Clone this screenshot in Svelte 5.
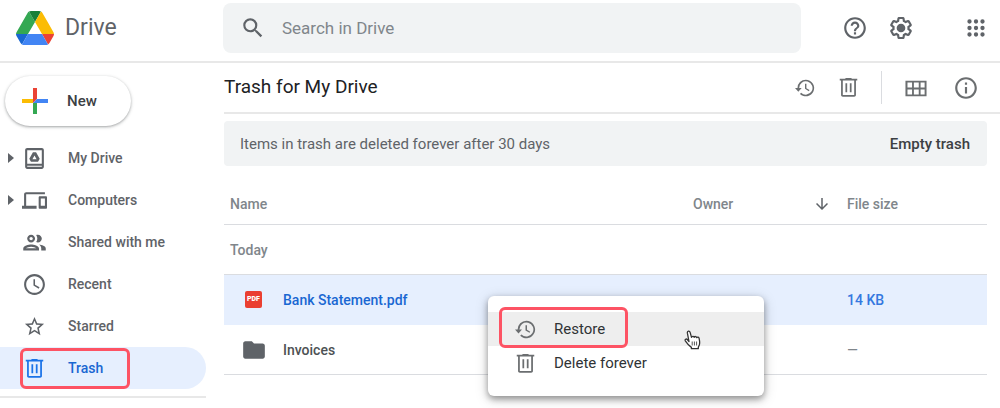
<script lang="ts">
  let search = '';
  let selected = 'Bank Statement.pdf';
  let activeNav = 'Trash';

  const navItems = [
    { label: 'My Drive', icon: 'drive', size: 25, expandable: true },
    { label: 'Computers', icon: 'computers', size: 25, expandable: true },
    { label: 'Shared with me', icon: 'shared', size: 27, expandable: false },
    { label: 'Recent', icon: 'recent', size: 25, expandable: false },
    { label: 'Starred', icon: 'star', size: 23, expandable: false },
    { label: 'Trash', icon: 'trash', size: 21, expandable: false },
  ];

  const files = [
    { name: 'Bank Statement.pdf', type: 'pdf', owner: '', size: '14 KB' },
    { name: 'Invoices', type: 'folder', owner: '', size: '—' },
  ];

  // 24x24 glyphs, filled with currentColor
  const icons: Record<string, string> = {
    search: 'M15.5 14h-.79l-.28-.27A6.47 6.47 0 0 0 16 9.5 6.5 6.5 0 1 0 9.5 16c1.61 0 3.09-.59 4.23-1.57l.27.28v.79l5 4.99L20.49 19l-4.99-5zm-6 0C7.01 14 5 11.99 5 9.5S7.01 5 9.5 5 14 7.01 14 9.5 11.99 14 9.5 14z',
    help: 'M11 18h2v-2h-2v2zm1-16C6.48 2 2 6.48 2 12s4.48 10 10 10 10-4.48 10-10S17.52 2 12 2zm0 18c-4.41 0-8-3.59-8-8s3.59-8 8-8 8 3.59 8 8-3.59 8-8 8zm0-14c-2.21 0-4 1.79-4 4h2c0-1.1.9-2 2-2s2 .9 2 2c0 2-3 1.75-3 5h2c0-2.25 3-2.5 3-5 0-2.21-1.79-4-4-4z',
    gear: 'M13.85 22.25h-3.7c-.74 0-1.36-.54-1.45-1.27l-.27-1.89c-.27-.14-.53-.29-.79-.46l-1.8.72c-.7.26-1.47-.03-1.81-.65L2.2 15.53c-.35-.66-.2-1.44.36-1.88l1.53-1.19c-.01-.15-.02-.3-.02-.46 0-.15.01-.31.02-.46l-1.52-1.19c-.59-.45-.74-1.26-.37-1.88l1.85-3.19c.34-.62 1.11-.9 1.79-.63l1.81.73c.26-.17.52-.32.78-.46l.27-1.91c.09-.7.71-1.25 1.44-1.25h3.7c.74 0 1.36.54 1.45 1.27l.27 1.89c.27.14.53.29.79.46l1.8-.72c.71-.26 1.48.03 1.82.65l1.84 3.18c.36.66.2 1.44-.36 1.88l-1.52 1.19c.01.15.02.3.02.46s-.01.31-.02.46l1.52 1.19c.56.45.72 1.23.37 1.86l-1.86 3.22c-.34.62-1.11.9-1.8.63l-1.8-.72c-.26.17-.52.32-.78.46l-.27 1.91c-.1.68-.72 1.22-1.46 1.22zm-3.23-2h2.76l.37-2.55.53-.22c.44-.18.88-.44 1.34-.78l.45-.34 2.38.96 1.38-2.4-2.03-1.58.07-.56c.03-.26.06-.51.06-.78s-.03-.53-.06-.78l-.07-.56 2.03-1.58-1.39-2.4-2.39.96-.45-.35c-.42-.32-.87-.58-1.33-.77l-.52-.22-.37-2.55h-2.76l-.37 2.55-.53.21c-.44.19-.88.44-1.34.79l-.45.33-2.38-.95-1.39 2.39 2.03 1.58-.07.56a7 7 0 0 0-.06.79c0 .26.02.53.06.78l.07.56-2.03 1.58 1.38 2.4 2.39-.96.45.35c.43.33.86.58 1.33.77l.53.22.38 2.55zM12 8a4 4 0 1 0 0 8 4 4 0 0 0 0-8z',
    apps: 'M6 8a2 2 0 1 0 0-4 2 2 0 0 0 0 4zm6 12a2 2 0 1 0 0-4 2 2 0 0 0 0 4zm-6 0a2 2 0 1 0 0-4 2 2 0 0 0 0 4zm0-6a2 2 0 1 0 0-4 2 2 0 0 0 0 4zm6 0a2 2 0 1 0 0-4 2 2 0 0 0 0 4zm4-8a2 2 0 1 0 4 0 2 2 0 0 0-4 0zm-4 2a2 2 0 1 0 0-4 2 2 0 0 0 0 4zm6 6a2 2 0 1 0 0-4 2 2 0 0 0 0 4zm0 6a2 2 0 1 0 0-4 2 2 0 0 0 0 4z',
    restore: 'M13 2a10 10 0 0 0-10 10H0l4 4.600L8 12H5a8 8 0 1 1 2.340 5.660l-1.420 1.420A10 10 0 1 0 13 2zm-1 5v6l4.600 2.800.8-1.300-3.700-2.300V7H12z',
    trash: 'M15.500 2V1h-7v1H2v2h1.500v16.500c0 1.100.9 2 2 2h13c1.100 0 2-.9 2-2V4H22V2h-6.500zm3 18.500h-13V4h13v16.500zM8.500 7h2v10.500h-2V7zm5 0h2v10.500h-2V7z',
    grid: 'M.5 4v17h23V4H.5zm7.200 15H2.700v-5.500h5V19zm0-7.500h-5V6h5v5.500zm7.300 7.500H9.700v-5.500H15V19zm0-7.500H9.700V6H15v5.500zm6.400 7.500H17v-5.500h4.400V19zm0-7.500H17V6h4.400v5.500z',
    info: 'M11 17h2v-6h-2v6zm1-15C6.480 2 2 6.480 2 12s4.480 10 10 10 10-4.480 10-10S17.520 2 12 2zm0 18c-4.410 0-8-3.590-8-8s3.590-8 8-8 8 3.590 8 8-3.590 8-8 8zM11 9h2V7h-2v2z',
    drive: 'M19 2H5c-1.100 0-2 .9-2 2v16c0 1.100.9 2 2 2h14c1.100 0 2-.9 2-2V4c0-1.100-.9-2-2-2zm0 18H5v-1h14v1zm0-3H5V4h14v13zM10.500 6 7 12.200 8.600 15h6.800l1.600-2.800L13.500 6h-3zm1.500 3 2 3.600h-4L12 9z',
    computers: 'M4 6h18V4H4c-1.100 0-2 .9-2 2v11H0v3h14v-3H4V6zm19 2h-6c-.55 0-1 .45-1 1v10c0 .55.45 1 1 1h6c.55 0 1-.45 1-1V9c0-.55-.45-1-1-1zm-1 9h-4v-7h4v7z',
    shared: 'M9 13.750c-2.340 0-7 1.170-7 3.500V19h14v-1.750c0-2.330-4.660-3.500-7-3.500zM4.340 17c.84-.58 2.870-1.250 4.660-1.250s3.820.67 4.660 1.250H4.340zM9 12c1.930 0 3.500-1.570 3.500-3.500S10.930 5 9 5 5.500 6.570 5.500 8.500 7.070 12 9 12zm0-5c.83 0 1.500.67 1.500 1.500S9.830 10 9 10s-1.500-.67-1.500-1.500S8.170 7 9 7zm7.040 6.810c1.160.84 1.960 1.960 1.960 3.440V19h4v-1.750c0-2.020-3.500-3.170-5.960-3.440zM15 12c1.930 0 3.500-1.570 3.500-3.500S16.930 5 15 5c-.54 0-1.040.13-1.500.35.63.89 1 1.980 1 3.150s-.37 2.260-1 3.150c.46.22.96.35 1.500.35z',
    recent: 'M12 2C6.500 2 2 6.500 2 12s4.500 10 10 10 10-4.500 10-10S17.500 2 12 2zm0 18c-4.410 0-8-3.590-8-8s3.590-8 8-8 8 3.590 8 8-3.590 8-8 8zm.5-13H11v6l5 3 .8-1.300-4.300-2.500V7z',
    star: 'm22 9.240-7.190-.62L12 2 9.190 8.630 2 9.240l5.460 4.730L5.820 21 12 17.270 18.180 21l-1.630-7.030L22 9.240zM12 15.400l-3.760 2.270 1-4.280-3.320-2.880 4.380-.38L12 6.100l1.710 4.040 4.380.38-3.320 2.880 1 4.280L12 15.400z',
    folder: 'M10 4H4c-1.100 0-2 .9-2 2v12c0 1.100.9 2 2 2h16c1.100 0 2-.9 2-2V8c0-1.100-.9-2-2-2h-8l-2-2z',
    down: 'M20 12l-1.410-1.410L13 16.170V4h-2v12.170l-5.580-5.590L4 12l8 8 8-8z',
  };
</script>

{#snippet icon(name: string, size: number)}
  <svg class="icon" width={size} height={size} viewBox="0 0 24 24" aria-hidden="true">
    <path d={icons[name]} fill="currentColor" />
  </svg>
{/snippet}

<div class="drive">
  <header class="topbar">
    <a class="brand" href="#home">
      <svg width="38" height="34" viewBox="0 0 87.3 78" aria-hidden="true">
        <path d="m6.600 66.850 3.850 6.650c.8 1.400 1.950 2.500 3.300 3.300l13.750-23.800h-27.500c0 1.550.4 3.100 1.200 4.500z" fill="#1967d2" />
        <path d="m43.650 25-13.750-23.800c-1.350.8-2.500 1.900-3.300 3.300l-25.400 44a9.060 9.060 0 0 0-1.200 4.500h27.500z" fill="#34a853" />
        <path d="m73.550 76.800c1.350-.8 2.500-1.900 3.300-3.300l9.250-16c.8-1.400 1.200-2.950 1.200-4.500h-27.500z" fill="#ea4335" />
        <path d="m43.650 25 13.750-23.800c-1.350-.8-2.900-1.200-4.500-1.200h-18.500c-1.600 0-3.150.45-4.500 1.200z" fill="#188038" />
        <path d="m59.800 53h-32.300l-13.750 23.800c1.350.8 2.900 1.200 4.500 1.200h50.800c1.600 0 3.150-.45 4.500-1.200z" fill="#4285f4" />
        <path d="m73.400 26.500-12.700-22c-.8-1.400-1.950-2.500-3.300-3.300l-13.750 23.800 16.150 28h27.450c0-1.550-.4-3.100-1.200-4.500z" fill="#fbbc04" />
      </svg>
      <span>Drive</span>
    </a>
    <label class="search">
      {@render icon('search', 26)}
      <input type="text" placeholder="Search in Drive" aria-label="Search in Drive" bind:value={search} />
    </label>
    <div class="topbar-actions">
      <button aria-label="Support">{@render icon('help', 26)}</button>
      <button aria-label="Settings">{@render icon('gear', 26)}</button>
      <button class="apps" aria-label="Google apps">{@render icon('apps', 26)}</button>
    </div>
  </header>

  <div class="body">
    <aside class="sidebar">
      <button class="new-btn">
        <svg width="26" height="26" viewBox="0 0 26 26" aria-hidden="true">
          <path d="M11 0h4v11l-4 4z" fill="#ea4335" />
          <path d="M0 11h11v4H0z" fill="#fbbc04" />
          <path d="M11 15h4v11h-4z" fill="#34a853" />
          <path d="M15 11h11v4H11z" fill="#4285f4" />
        </svg>
        <span>New</span>
      </button>
      <nav>
        {#each navItems as item}
          <a
            class="nav-item"
            class:active={item.label === activeNav}
            href="#{item.icon}"
            on:click={() => (activeNav = item.label)}
          >
            <span class="caret" class:shown={item.expandable}></span>
            {@render icon(item.icon, item.size)}
            <span class="nav-label">{item.label}</span>
            {#if item.icon === 'trash'}
              <span class="highlight"></span>
            {/if}
          </a>
        {/each}
      </nav>
    </aside>

    <main class="content">
      <div class="toolbar">
        <h1>Trash for My Drive</h1>
        <div class="toolbar-actions">
          <div class="item-actions">
            <button aria-label="Restore from trash">{@render icon('restore', 20)}</button>
            <button aria-label="Delete forever">{@render icon('trash', 21)}</button>
          </div>
          <div class="view-actions">
            <button aria-label="Grid view">{@render icon('grid', 22)}</button>
            <button aria-label="View details">{@render icon('info', 26)}</button>
          </div>
        </div>
      </div>

      <div class="banner">
        <span>Items in trash are deleted forever after 30 days</span>
        <button>Empty trash</button>
      </div>

      <div class="files">
        <table>
          <thead>
            <tr>
              <th>Name</th>
              <th class="col-owner">Owner</th>
              <th class="col-sort" aria-label="Sort direction">{@render icon('down', 18)}</th>
              <th class="col-size">File size</th>
            </tr>
          </thead>
          <tbody>
            <tr>
              <th colspan="4" scope="rowgroup">Today</th>
            </tr>
            {#each files as file}
              <tr class="file" class:selected={file.name === selected} on:click={() => (selected = file.name)}>
                <td>
                  <div class="file-name">
                    <span class="file-icon">
                      {#if file.type === 'pdf'}
                        <span class="pdf">PDF</span>
                      {:else}
                        {@render icon('folder', 26)}
                      {/if}
                    </span>
                    {file.name}
                  </div>
                </td>
                <td>{file.owner}</td>
                <td></td>
                <td class="size">{file.size}</td>
              </tr>
            {/each}
          </tbody>
        </table>

        <!-- Context menu of the selected row -->
        <div class="menu" role="menu">
          <button class="hovered" role="menuitem">
            {@render icon('restore', 21)}
            <span>Restore</span>
            <span class="highlight"></span>
          </button>
          <button role="menuitem">
            {@render icon('trash', 21)}
            <span>Delete forever</span>
          </button>
          <svg class="pointer" width="17" height="20" viewBox="0 0 17 20" aria-hidden="true">
            <path
              d="M5 11.500 3.400 3.200C3 .8 5.600.4 6.200 2.600L7.500 7.400c.3-1.400 2.300-1.500 2.700-.1.500-1.200 2.200-1 2.600.4.7-.9 2-.6 2.300.6.500 2.200 1 4.500.2 6.700l-1 2.200v1.500H7.400v-1.300C5.300 15.900 3 13.300 1.300 10.800c-.7-1.400 1-2.400 2-1.300z"
              fill="#fff"
              stroke="#333"
              stroke-width="1.300"
              stroke-linejoin="round"
            />
            <path d="M8.200 11.500v4M10.400 11.500v4M12.600 11.500v4" stroke="#555" fill="none" />
          </svg>
        </div>
      </div>
    </main>
  </div>
</div>

<style>
  :global(body) {
    background: #fff;
  }

  .drive {
    min-height: 100vh;
    font-family: Roboto, 'Liberation Sans', sans-serif;
    font-size: 14px;
    color: #5f6368;
  }

  button {
    display: flex;
    align-items: center;
    padding: 0;
    border: none;
    background: none;
    font: inherit;
    color: inherit;
    cursor: pointer;
  }

  a {
    color: inherit;
    text-decoration: none;
  }

  .icon {
    display: block;
    flex: none;
  }

  /* Top bar */
  .topbar {
    display: flex;
    align-items: center;
    box-sizing: border-box;
    height: 63px;
    padding: 0 11px 6px 16px;
    border-bottom: 2px solid #e8e8e8;
  }

  .brand {
    display: flex;
    align-items: center;
    gap: 11px;
    width: 207px;
    font-size: 23px;
  }

  .search {
    display: flex;
    flex: 1;
    align-items: center;
    gap: 16px;
    box-sizing: border-box;
    height: 50px;
    padding: 0 17px;
    border-radius: 8px;
    background: #f1f3f4;
  }

  .search input {
    flex: 1;
    min-width: 0;
    padding: 0;
    border: none;
    outline: none;
    background: none;
    font: inherit;
    font-size: 17px;
    color: #3c4043;
  }

  .search input::placeholder {
    color: #80868b;
    opacity: 1;
  }

  .topbar-actions {
    display: flex;
    gap: 20px;
    margin-left: 41px;
  }

  .apps {
    margin-left: 29px;
  }

  .body {
    display: flex;
    align-items: flex-start;
  }

  /* Sidebar */
  .sidebar {
    flex: none;
    width: 206px;
    margin-right: 18px;
    padding-top: 13px;
  }

  .new-btn {
    gap: 19px;
    box-sizing: border-box;
    width: 126px;
    height: 50px;
    margin: 0 0 11px 5px;
    padding-left: 17px;
    border-radius: 25px;
    background: #fff;
    box-shadow: 0 1px 2px rgba(60, 64, 67, 0.3), 0 1px 3px 1px rgba(60, 64, 67, 0.15);
    font-size: 15px;
    font-weight: 500;
    color: #3c4043;
  }

  nav {
    padding-bottom: 7px;
    border-bottom: 2px solid #e8e8e8;
  }

  .nav-item {
    position: relative;
    display: grid;
    grid-template-columns: 14px 25px auto;
    align-items: center;
    column-gap: 8px;
    height: 42px;
    border-radius: 0 21px 21px 0;
    font-weight: 500;
  }

  .nav-item .icon {
    justify-self: center;
  }

  .nav-label {
    padding-left: 13px;
  }

  .nav-item.active {
    background: #e6effe;
    color: #1967d2;
  }

  .nav-item.active .icon {
    color: #1a73e8;
  }

  .caret.shown {
    justify-self: end;
    border-top: 5px solid transparent;
    border-bottom: 5px solid transparent;
    border-left: 6px solid #5f6368;
  }

  .highlight {
    position: absolute;
    box-sizing: border-box;
    border: 3px solid #fd5364;
    border-radius: 6px;
    pointer-events: none;
  }

  .nav-item .highlight {
    inset: 1px auto 0 20px;
    width: 110px;
  }

  /* Content */
  .content {
    flex: 1;
    min-width: 0;
  }

  .toolbar {
    display: flex;
    align-items: center;
    justify-content: space-between;
    box-sizing: border-box;
    height: 51px;
    padding-right: 21px;
    border-bottom: 2px solid #e8e8e8;
  }

  h1 {
    margin: 0 0 2px;
    font-size: 19px;
    font-weight: 400;
    color: #202124;
  }

  .toolbar-actions,
  .item-actions,
  .view-actions {
    display: flex;
    align-items: center;
    height: 33px;
    color: #6b6e70;
  }

  .item-actions {
    gap: 23px;
    padding-right: 22px;
    border-right: 1px solid #dadce0;
  }

  .view-actions {
    gap: 26px;
    padding-left: 23px;
  }

  .banner {
    display: flex;
    align-items: center;
    justify-content: space-between;
    height: 45px;
    margin: 7px 13px 9px 0;
    padding: 0 17px 0 16px;
    border-radius: 4px;
    background: #f1f3f4;
    font-size: 15px;
    color: #5f6368;
  }

  .banner button {
    font-weight: 500;
    color: #3c4043;
  }

  .files {
    position: relative;
    margin-right: 13px;
  }

  table {
    width: 100%;
    border-spacing: 0;
    table-layout: fixed;
  }

  tr {
    height: 50px;
  }

  th,
  td {
    box-sizing: border-box;
    height: 50px;
    padding: 0;
    border-bottom: 1px solid #dadce0;
    text-align: left;
  }

  th {
    font-weight: 500;
    color: #80868b;
  }

  thead th {
    padding-top: 8px;
  }

  th:first-child {
    padding-left: 6px;
  }

  .col-owner {
    width: 120px;
  }

  .col-sort {
    width: 34px;
    color: #5f6368;
  }

  .col-size {
    width: 140px;
  }

  .file {
    font-weight: 500;
    color: #4d5154;
  }

  .file.selected {
    background: #e6effe;
    color: #1967d2;
  }

  .file.selected td {
    border-bottom-color: transparent;
  }

  .file-name {
    display: flex;
    align-items: center;
  }

  .file-icon {
    display: flex;
    justify-content: center;
    width: 59px;
    color: #5f6368;
  }

  .pdf {
    width: 17px;
    border-radius: 2px;
    background: #ea3f31;
    font-size: 7px;
    font-weight: 900;
    line-height: 17px;
    text-align: center;
    color: #fff;
  }

  .size {
    font-weight: 400;
    color: #80868b;
  }

  .file.selected .size {
    font-weight: 500;
    color: #3478e0;
  }

  /* Context menu */
  .menu {
    position: absolute;
    top: 121px;
    left: 264px;
    box-sizing: border-box;
    width: 276px;
    padding: 16px 0;
    border-radius: 6px;
    background: #fff;
    box-shadow: 0 3px 6px rgba(0, 0, 0, 0.35), 0 3px 14px rgba(0, 0, 0, 0.18);
  }

  .menu button {
    position: relative;
    gap: 18px;
    width: 100%;
    height: 34px;
    padding-left: 27px;
    font-size: 15px;
    color: #303336;
  }

  .menu button.hovered {
    background: #eee;
  }

  .menu .icon {
    color: #6b6e70;
  }

  .menu .highlight {
    inset: -5px auto -2px 11px;
    width: 129px;
  }

  .pointer {
    position: absolute;
    top: 34px;
    left: 196px;
  }
</style>
